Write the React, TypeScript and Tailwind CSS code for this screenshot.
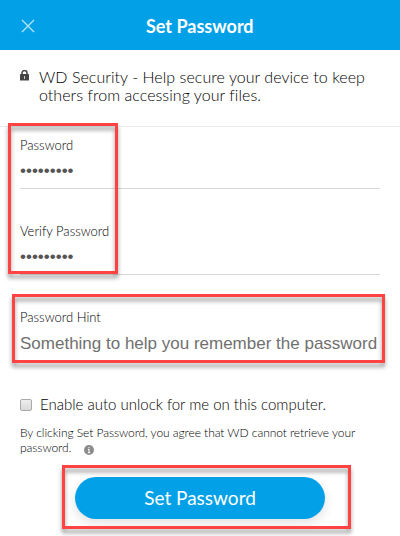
import { useState } from 'react';
import clsx from 'clsx';

const MASK = '•••••••••';

function Highlight({ className }: { className: string }) {
  return (
    <div
      className={clsx(
        'pointer-events-none absolute border-3 border-[#ff4343] drop-shadow-[0_4px_2px_rgba(0,0,0,0.4)]',
        className,
      )}
    />
  );
}

function PasswordField({ label }: { label: string }) {
  return (
    <div className="ml-5 mr-5 h-[86px] border-b border-[#d8d8d8]">
      <div className="pt-[33px]">
        <p className="text-[13px] leading-[18px] whitespace-nowrap">{label}</p>
        <p className="mt-[8px] font-['Liberation_Sans'] text-[17px] leading-[18px] font-normal text-[#555]">{MASK}</p>
      </div>
    </div>
  );
}

export default function App() {
  const [autoUnlock, setAutoUnlock] = useState(false);

  return (
    <div className="relative h-[536px] w-[400px] overflow-hidden bg-white font-['Lato',sans-serif] font-light text-black">
      {/* Header */}
      <header className="flex h-[50px] items-center bg-[#02a1e7] pl-[21px] text-white">
        <svg width="14" height="14" viewBox="0 0 14 14" fill="none" stroke="#b8e5f9" strokeWidth="1.3" className="mt-[2px]">
          <path d="M1 1l12 12M13 1L1 13" />
        </svg>
        <h1 className="mt-[2px] ml-[111px] text-[18px] leading-[24px] font-bold whitespace-nowrap">Set Password</h1>
      </header>

      <section className="flex h-[77px] border-b border-[#ebebeb] pt-[18px] pl-5">
        <svg width="9" height="11" viewBox="0 0 9 11" className="mt-[2px] shrink-0">
          <path d="M2 5V3a2.5 2.5 0 015 0v2" fill="none" stroke="#444" strokeWidth="1.5" />
          <rect y="4" width="9" height="6.5" rx=".6" fill="#444" />
          <path d="M4.5 6v3" stroke="#ccc" />
        </svg>
        <p className="ml-[10px] text-[16px] leading-[18px] tracking-[0.045px] whitespace-nowrap">
          WD Security - Help secure your device to keep
          <br />
          others from accessing your files.
        </p>
      </section>

      <div className="-mt-[24px]">
        <PasswordField label="Password" />
        <PasswordField label="Verify Password" />
      </div>

      <div className="px-5 pt-[33px]">
        <p className="text-[13px] leading-[18px]">Password Hint</p>
        <p className="mt-[7px] font-['Liberation_Sans'] text-[17px] leading-[22px] font-normal whitespace-nowrap text-[#707070]">
          Something to help you remember the password
        </p>
      </div>

      <label className="mt-[39px] flex h-[20px] items-center pl-5">
        <input
          type="checkbox"
          checked={autoUnlock}
          onChange={(e) => setAutoUnlock(e.target.checked)}
          className="mt-px h-[12px] w-[12px] appearance-none rounded-[2px] border border-[#aaa] bg-linear-to-b from-[#eee] to-[#d9d9d9] checked:bg-[#02a1e7]"
        />
        <span className="ml-[8px] text-[15px] whitespace-nowrap">Enable auto unlock for me on this computer.</span>
      </label>

      <div className="mt-[11px] pl-5 text-[12px] leading-[15px] tracking-[-0.055px] whitespace-nowrap">
        <p>By clicking Set Password, you agree that WD cannot retrieve your</p>
        <p className="flex">
          password.
          <svg width="10" height="10" viewBox="0 0 10 10" className="mt-[5px] ml-[13px]">
            <circle cx="5" cy="5" r="5" fill="#8c8c8c" />
            <path d="M5 2v1.3M5 4.2V8M4 4.6h1M3.8 7.7h2.4" stroke="#fff" strokeWidth="1" />
          </svg>
        </p>
      </div>

      <button className="mt-[22px] ml-[75px] h-[42px] w-[250px] rounded-full bg-[#02a1e7] text-[19px] font-normal text-white shadow-[0_4px_12px_rgba(0,0,0,0.12)]">
        Set Password
      </button>

      {/* Callouts over the form */}
      <Highlight className="top-[123px] left-[8px] h-[151px] w-[110px]" />
      <Highlight className="top-[294px] left-[12px] h-[69px] w-[373px]" />
      <Highlight className="top-[465px] left-[62px] h-[64px] w-[289px]" />
    </div>
  );
}
